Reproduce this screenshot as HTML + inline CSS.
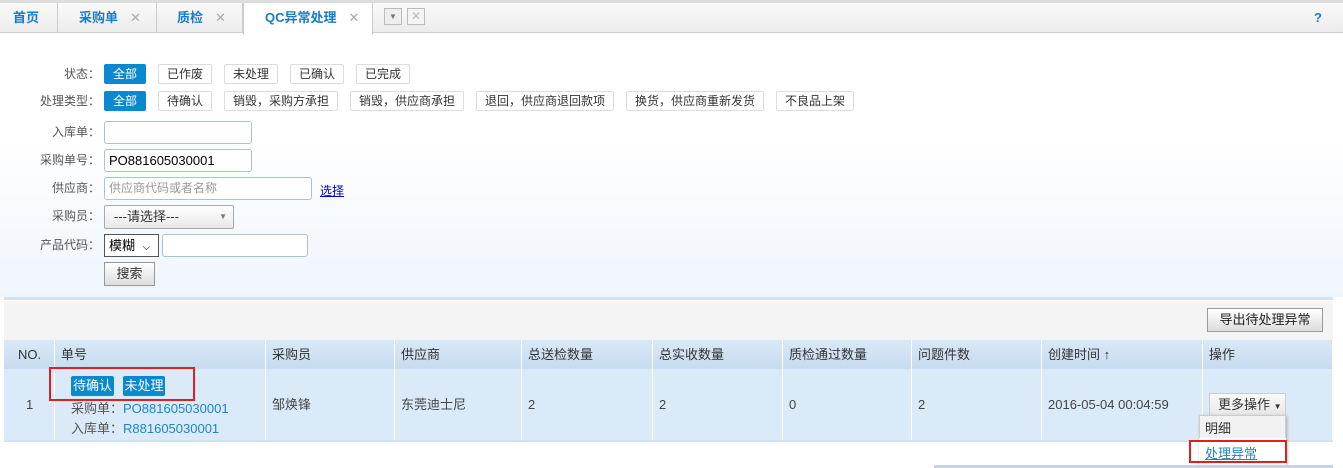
<!DOCTYPE html><html><head><meta charset="utf-8"><style>
*{box-sizing:border-box}
body{margin:0;width:1343px;height:468px;overflow:hidden;background:#fff;font-family:"Liberation Sans","Noto Sans CJK SC",sans-serif;font-size:12px;color:#333;position:relative}
.a{position:absolute}
.tabbar{left:0;top:0;width:1343px;height:33px;background:linear-gradient(#fafafa,#ececec);border-top:3px solid #ddd;border-bottom:1px solid #ccc}
.tab{top:3px;height:30px;border-right:1px solid #ccc;color:#1a7cc4;font-weight:bold;font-size:13px;line-height:30px}
.tab .x{color:#aaa;font-weight:normal;margin-left:12px;font-size:13px}
.form{left:0;top:34px;width:1343px;height:263px;background:linear-gradient(#fff 40%,#eef5fc)}
.lbl{color:#555;text-align:right;width:100px;font-family:"Noto Sans CJK SC",sans-serif;line-height:16px}
.btn{height:20px;border:1px solid #ddd;border-radius:2px;background:#fff;line-height:18px;text-align:center;color:#333}
.btn.on{background:#0a88d0;border-color:#0a88d0;color:#fff}
.inp{border:1px solid #a9c2dc;border-radius:3px;background:#fff;height:23px;line-height:21px;padding-left:4px;font-size:13px}
.gbtn{border:1px solid #999;background:linear-gradient(#fff,#ddd);text-align:center}
.th,.td{border-right:1px solid #fff;padding-left:6px;font-size:13px}
.th{top:340px;height:29px;line-height:29px;background:linear-gradient(#d8e8f6,#c7dcf0);color:#333}
.td{top:369px;height:71px;line-height:71px;background:#dbeaf8;color:#444}
.blue{color:#1f86c9}
</style></head><body>
<div class="a tabbar"></div>
<div class="a tab" style="left:0;width:58px;padding-left:13px">首页</div>
<div class="a tab" style="left:58px;width:99px;padding-left:21px">采购单<span class="x">✕</span></div>
<div class="a tab" style="left:157px;width:86px;padding-left:20px">质检<span class="x">✕</span></div>
<div class="a tab" style="left:243px;width:130px;height:31px;padding-left:21px;background:#fff;border-left:1px solid #ccc">QC异常处理<span class="x">✕</span></div>
<div class="a" style="left:384px;top:8px;width:18px;height:17px;border:1px solid #bbb;background:#eee;font-size:8px;color:#777;text-align:center;line-height:15px">▼</div>
<div class="a" style="left:407px;top:8px;width:18px;height:17px;border:1px solid #bbb;background:#f4f4f4;color:#bbb;text-align:center;line-height:15px;font-size:12px">✕</div>
<div class="a" style="left:1314px;top:10px;color:#1a7cc4;font-weight:bold;font-size:13px">?</div>
<div class="a form"></div>
<div class="a lbl" style="left:0;top:66px">状态：</div>
<div class="a btn on" style="left:104px;top:64px;width:42px">全部</div>
<div class="a btn" style="left:158px;top:64px;width:54px">已作废</div>
<div class="a btn" style="left:224px;top:64px;width:54px">未处理</div>
<div class="a btn" style="left:290px;top:64px;width:54px">已确认</div>
<div class="a btn" style="left:356px;top:64px;width:54px">已完成</div>
<div class="a lbl" style="left:0;top:93px">处理类型：</div>
<div class="a btn on" style="left:104px;top:91px;width:42px">全部</div>
<div class="a btn" style="left:158px;top:91px;width:54px">待确认</div>
<div class="a btn" style="left:224px;top:91px;width:114px">销毁，采购方承担</div>
<div class="a btn" style="left:350px;top:91px;width:114px">销毁，供应商承担</div>
<div class="a btn" style="left:476px;top:91px;width:138px">退回，供应商退回款项</div>
<div class="a btn" style="left:626px;top:91px;width:138px">换货，供应商重新发货</div>
<div class="a btn" style="left:776px;top:91px;width:78px">不良品上架</div>
<div class="a lbl" style="left:0;top:124px">入库单：</div>
<div class="a inp" style="left:104px;top:121px;width:148px"></div>
<div class="a lbl" style="left:0;top:152px">采购单号：</div>
<div class="a inp" style="left:104px;top:149px;width:148px;color:#000">PO881605030001</div>
<div class="a lbl" style="left:0;top:180px">供应商：</div>
<div class="a inp" style="left:104px;top:177px;width:208px;color:#999;font-size:12px">供应商代码或者名称</div>
<div class="a" style="left:320px;top:182px;color:#00c;text-decoration:underline">选择</div>
<div class="a lbl" style="left:0;top:208px">采购员：</div>
<div class="a" style="left:104px;top:205px;width:130px;height:24px;border:1px solid #aaa;border-radius:2px;background:linear-gradient(#fff,#e8e8e8);line-height:22px;padding-left:9px;font-size:13px">---请选择---<span style="position:absolute;right:6px;font-size:8px;color:#777">▼</span></div>
<div class="a lbl" style="left:0;top:237px">产品代码：</div>
<div class="a" style="left:104px;top:234px;width:55px;height:23px;border:1px solid #555;background:#fff;line-height:21px;padding-left:4px;font-size:13px;color:#000">模糊 <span style="font-size:10px;margin-left:4px">⌵</span></div>
<div class="a inp" style="left:162px;top:234px;width:146px"></div>
<div class="a gbtn" style="left:104px;top:262px;width:51px;height:24px;line-height:22px;font-size:13px">搜索</div>
<div class="a" style="left:4px;top:297px;width:1329px;height:3px;background:#d3e3f2"></div>
<div class="a" style="left:4px;top:301px;width:1329px;height:39px;background:#f4f4f4"></div>
<div class="a gbtn" style="left:1207px;top:308px;width:116px;height:24px;line-height:22px;font-size:13px;color:#222">导出待处理异常</div>
<div class="a th" style="left:4px;width:51px;padding-left:14px">NO.</div>
<div class="a th" style="left:55px;width:211px">单号</div>
<div class="a th" style="left:266px;width:129px">采购员</div>
<div class="a th" style="left:395px;width:127px">供应商</div>
<div class="a th" style="left:522px;width:131px">总送检数量</div>
<div class="a th" style="left:653px;width:130px">总实收数量</div>
<div class="a th" style="left:783px;width:129px">质检通过数量</div>
<div class="a th" style="left:912px;width:130px">问题件数</div>
<div class="a th" style="left:1042px;width:161px">创建时间 ↑</div>
<div class="a th" style="left:1203px;width:130px">操作</div>
<div class="a td" style="left:4px;width:51px;padding-left:22px">1</div>
<div class="a td" style="left:55px;width:211px"></div>
<div class="a td" style="left:266px;width:129px">邹焕锋</div>
<div class="a td" style="left:395px;width:127px">东莞迪士尼</div>
<div class="a td" style="left:522px;width:131px">2</div>
<div class="a td" style="left:653px;width:130px">2</div>
<div class="a td" style="left:783px;width:129px">0</div>
<div class="a td" style="left:912px;width:130px">2</div>
<div class="a td" style="left:1042px;width:161px">2016-05-04 00:04:59</div>
<div class="a td" style="left:1203px;width:130px"></div>
<div class="a" style="left:4px;top:440px;width:1329px;height:2px;background:#d3e3f2"></div>
<div class="a" style="left:71px;top:376px;width:43px;height:20px;background:#0a88d0;color:#fff;border-radius:2px;text-align:center;line-height:20px;font-size:13px">待确认</div>
<div class="a" style="left:123px;top:376px;width:42px;height:20px;background:#0a88d0;color:#fff;border-radius:2px;text-align:center;line-height:20px;font-size:13px">未处理</div>
<div class="a" style="left:71px;top:398px;color:#555;font-size:13px">采购单：<span class="blue">PO881605030001</span></div>
<div class="a" style="left:71px;top:418px;color:#555;font-size:13px">入库单：<span class="blue">R881605030001</span></div>
<div class="a" style="left:49px;top:367px;width:146px;height:34px;border:2px solid #e02020"></div>
<div class="a" style="left:1209px;top:393px;width:77px;height:24px;border:1px solid #ccc;background:linear-gradient(#fafafa,#e6e6e6);line-height:22px;padding-left:8px;color:#333;font-size:13px">更多操作 <span style="font-size:8px">▼</span></div>
<div class="a" style="left:1199px;top:415px;width:87px;height:50px;border:1px solid #ccc;background:#f2f2f2;box-shadow:1px 1px 3px #aaa"></div>
<div class="a" style="left:1205px;top:418px;color:#333;font-size:13px">明细</div>
<div class="a" style="left:1199px;top:438px;width:87px;height:27px;background:#fff"></div>
<div class="a" style="left:1205px;top:443px;color:#1f86c9;text-decoration:underline;font-size:13px">处理异常</div>
<div class="a" style="left:1189px;top:440px;width:98px;height:23px;border:2px solid #e02020"></div>
<div class="a" style="left:934px;top:465px;width:399px;height:3px;background:#c7d3df"></div>
</body></html>
